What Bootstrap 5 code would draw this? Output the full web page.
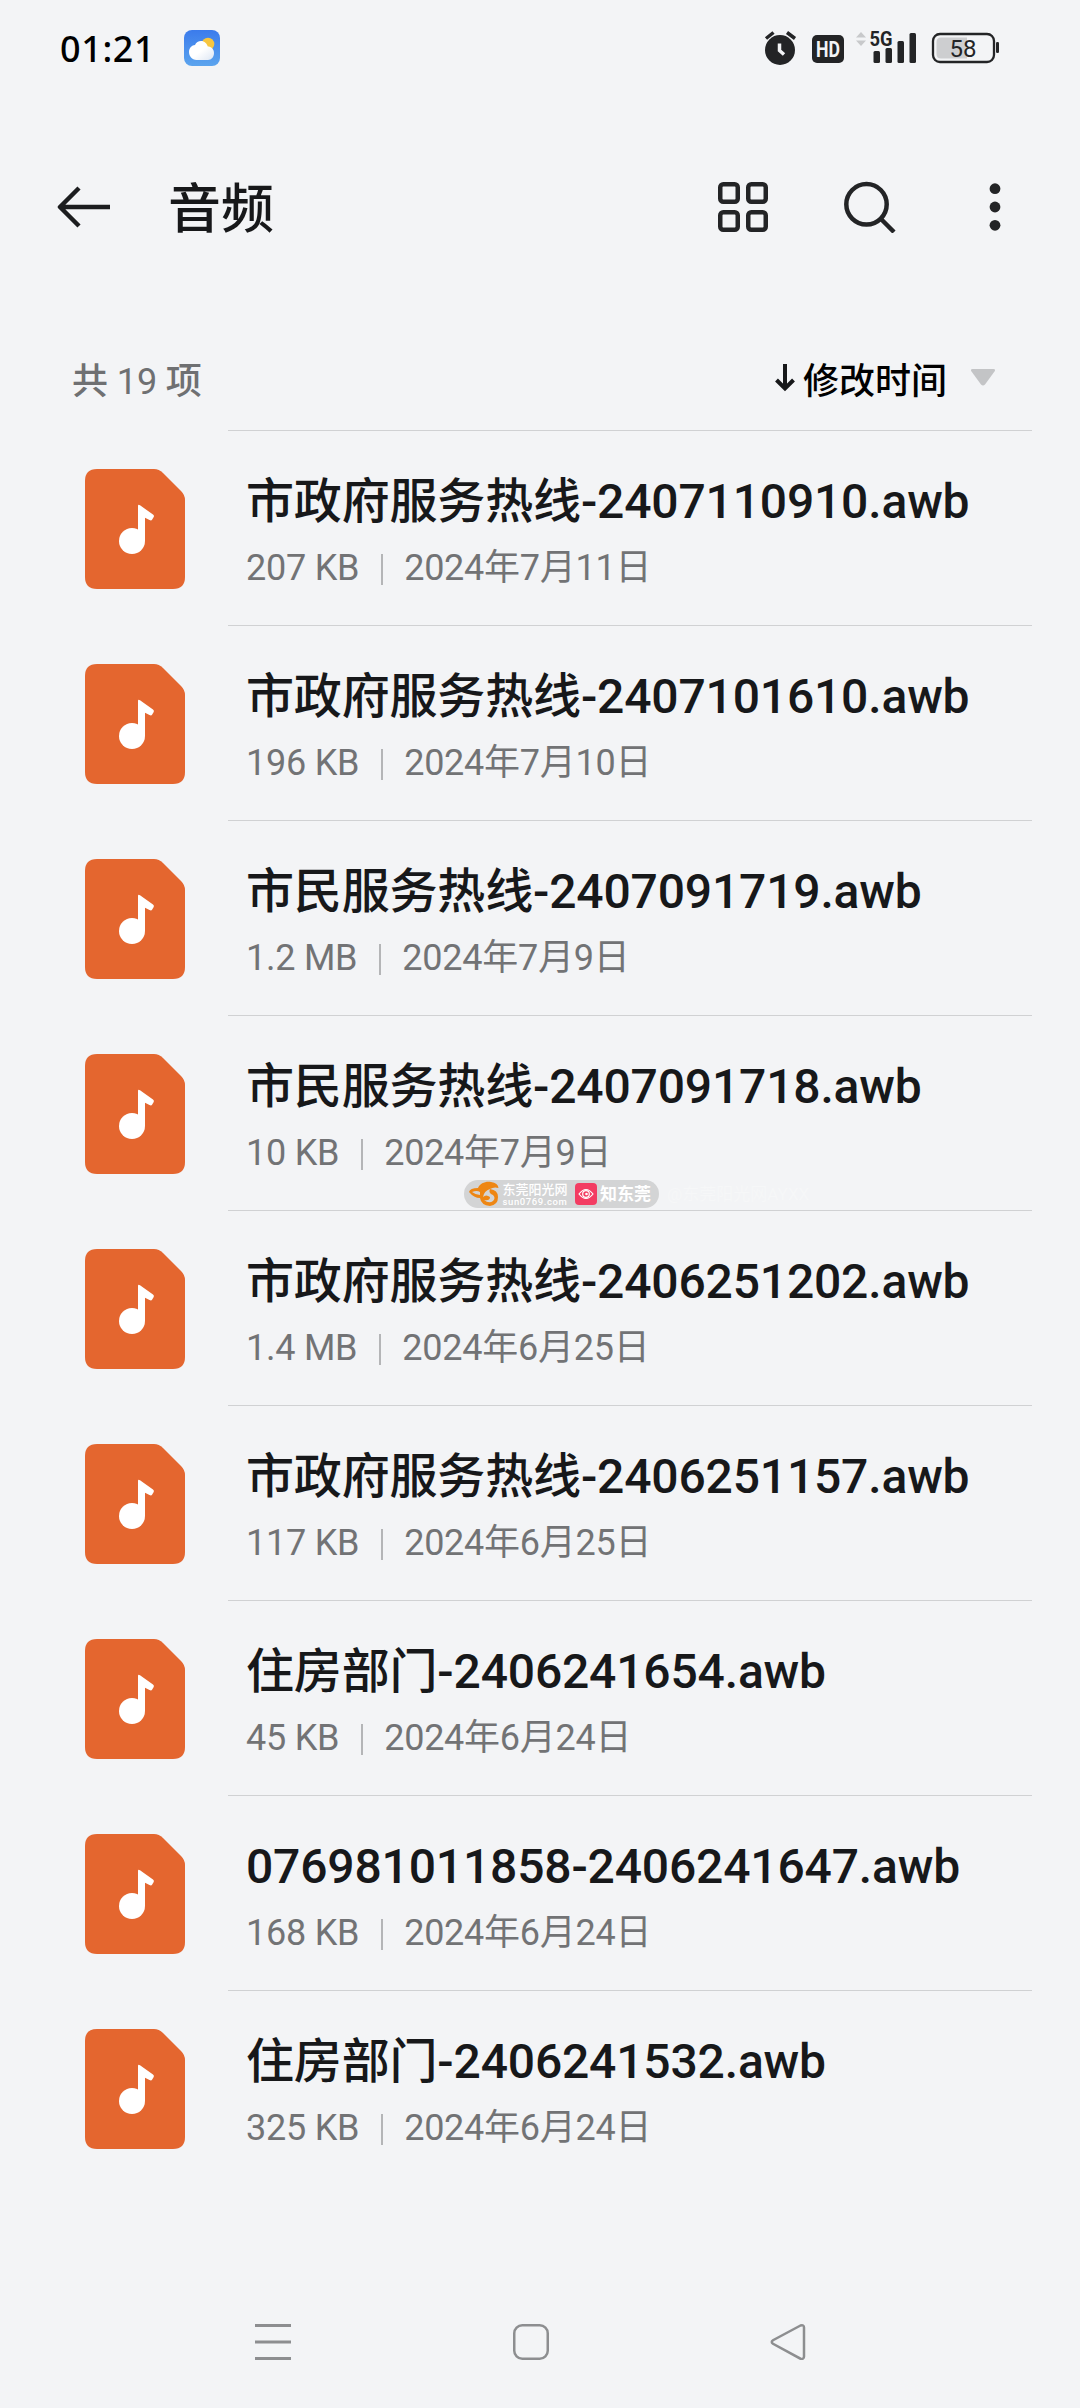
<!DOCTYPE html>
<html lang="zh-CN">
<head>
<meta charset="utf-8">
<meta name="viewport" content="width=device-width, initial-scale=1">
<title>音频</title>
<link href="https://cdn.jsdelivr.net/npm/bootstrap@5.3.0/dist/css/bootstrap.min.css" rel="stylesheet">
<style>
html,body{height:2408px}
body{width:1080px;background:#f3f4f6;color:#17181a;font-family:Roboto,"Noto Sans CJK SC",sans-serif;font-size:36px;line-height:1;overflow:hidden}
svg{display:block;flex:none}
.statusbar{height:96px;padding:0 80px 0 60px}
.clock{font-family:"Noto Sans",sans-serif;font-weight:500;font-size:36px;letter-spacing:.6px;color:#000;width:124px;padding-top:1px}
.topbar{height:222px;padding:0 79px 0 57px}
.page-title{font-size:53px;font-weight:500;margin:0 0 0 58px;padding-top:7px}
.search-icon{margin:0 93px 0 76px}
.sortbar{height:112px;padding:46px 85px 0 72px}
.count{color:#6f7072;font-weight:500;letter-spacing:-.1px}
.count span{font-weight:400}
.sort-by{color:#000;font-weight:500}
.file{height:195px;padding:0 48px 0 85px}
.file-body{margin-left:43px;padding-left:18px;border-top:1px solid #d0d1d3;height:195px}
.file-icon{margin-top:39px}
.file-name{font-size:48px;font-weight:500;line-height:60px;margin-top:41px;letter-spacing:-.16px;white-space:nowrap}
.file-meta{color:#727375;line-height:44px;margin-top:14px;letter-spacing:-.25px;white-space:nowrap}
.bar{width:2px;height:31px;background:#b4b5b7;margin:3px 21.5px 0 21.5px}
.wm{left:464px;top:1180px;height:28px;color:#fff;white-space:nowrap}
.wm-pill{width:195px;height:28px;border-radius:14px;background:#d3d4d5;padding-left:5px}
.wm-site{width:66px;margin:0 7px 0 2px;font-size:13px;font-weight:500;line-height:14px;text-align:center}
.wm-url{font-size:9.5px;line-height:9px;letter-spacing:.6px}
.wm-app{font-size:17px;font-weight:700;margin-left:3px}
.wm-user{font-size:17px;color:#f6f7f8;margin-left:8px}
.navkeys{padding:0 274px 0 254px;height:134px;margin-top:90px}
</style>
</head>
<body class="position-relative">
<svg width="0" height="0" class="position-absolute">
<symbol id="audio" viewBox="0 0 100 120">
<path fill="#e4662f" d="M12 0H69Q74 0 78 4L96 22Q100 26 100 31V108Q100 120 88 120H12Q0 120 0 108V12Q0 0 12 0Z"/>
<circle cx="47" cy="72" r="13" fill="#fff"/>
<path fill="#fff" d="M53 62V37Q53 35 55 36.3L68 45.500Q69.500 46.500 68.700 48L67.200 50.500Q66.300 52 64.500 51L60 48.700V72H53Z"/>
</symbol>
</svg>

<header class="statusbar d-flex align-items-center">
  <div class="clock">01:21</div>
  <svg width="36" height="36" viewBox="0 0 36 36">
    <defs><linearGradient id="sky" x2="0" y2="1"><stop stop-color="#3b7bec"/><stop offset="1" stop-color="#5ba4ee"/></linearGradient>
    <linearGradient id="cl" x2="1" y2="1"><stop offset=".5" stop-color="#fff"/><stop offset="1" stop-color="#dde6f3"/></linearGradient></defs>
    <rect width="36" height="36" rx="8" fill="url(#sky)"/><circle cx="24" cy="14" r="6.300" fill="#f7c640"/>
    <path fill="url(#cl)" d="M12.500 30C8 30 5 26 5 22s3-7 6-7c1-2.500 3.500-4 6-4 3.500 0 6 2.500 6.800 5.500C27 16.500 30 19 30 23s-2.500 7-6 7Z"/>
  </svg>
  <svg class="ms-auto" width="236" height="40" viewBox="765 28 236 40" fill="#232426">
    <circle cx="781" cy="50" r="15"/><path d="M767 38.500 774.500 32.500M788 32.500 796 38.500" stroke="#232426" stroke-width="3.500"/>
    <path d="M780.500 43.500V50.500L785 54.500" fill="none" stroke="#f3f4f6" stroke-width="3.500"/>
    <rect x="813" y="35" width="32" height="28" rx="5"/>
    <text x="829" y="56.800" font-family="Roboto" font-weight="700" font-size="22.500" text-anchor="middle" textLength="24" lengthAdjust="spacingAndGlyphs" fill="#f3f4f6">HD</text>
    <path d="M862 32 867 37.500H857ZM862 46 857 40.500H867Z" fill="#c8c9cb"/>
    <text x="870.500" y="46" font-family="Roboto" font-weight="700" font-size="20.500" textLength="23" lengthAdjust="spacingAndGlyphs">5G</text>
    <rect x="874.500" y="51" width="6.500" height="12" rx="1.500"/><rect x="886.500" y="48" width="6.500" height="15" rx="1.500"/><rect x="898.500" y="41" width="6.500" height="22" rx="1.500"/><rect x="910.500" y="33" width="6.500" height="30" rx="1.500"/>
    <rect x="934" y="34" width="61" height="28" rx="7" fill="none" stroke="#232426" stroke-width="2.300"/>
    <path d="M968 37.500V58.500H942Q937.500 58.500 937.500 54V42Q937.500 37.500 942 37.500Z" fill="#cdced0"/>
    <rect x="997" y="42" width="3" height="11" rx="1.300"/>
    <text x="964" y="57" font-family="Roboto" font-size="24" text-anchor="middle">58</text>
  </svg>
</header>

<nav class="topbar d-flex align-items-center">
  <svg width="53" height="42" viewBox="0 0 53 42" fill="none" stroke="#1c1d1f" stroke-width="4.500" stroke-linejoin="round"><path d="M53 21H3M22 2 3 21 22 40"/></svg>
  <h1 class="page-title">音频</h1>
  <svg class="ms-auto" width="50" height="50" viewBox="0 0 50 50" fill="none" stroke="#232426" stroke-width="4.500"><rect x="2.250" y="2.250" width="17.500" height="17.500" rx="3"/><rect x="30.250" y="2.250" width="17.500" height="17.500" rx="3"/><rect x="2.250" y="30.250" width="17.500" height="17.500" rx="3"/><rect x="30.250" y="30.250" width="17.500" height="17.500" rx="3"/></svg>
  <svg class="search-icon" width="52" height="52" viewBox="0 0 52 52" fill="none" stroke="#232426" stroke-width="4.500"><circle cx="22.500" cy="23.300" r="20.200"/><path d="M36.500 37.500 50 51"/></svg>
  <svg width="12" height="50" viewBox="0 0 12 50" fill="#232426"><circle cx="6" cy="6.700" r="5.400"/><circle cx="6" cy="25" r="5.400"/><circle cx="6" cy="43.300" r="5.400"/></svg>
</nav>

<section class="sortbar d-flex justify-content-between">
  <div class="count">共 <span>19</span> 项</div>
  <div class="d-flex sort-by">
    <svg width="20" height="28" viewBox="0 0 20 28" fill="none" stroke="#17181a" stroke-width="4"><path d="M10 0V25M1.500 16 10 24.500 18.500 16"/></svg>
    <div class="ms-2 me-4">修改时间</div>
    <svg class="mt-1" width="24" height="18" viewBox="0 -1 24 18" fill="#c3c4c6"><path d="M1.500 0H22.500Q25 0 23.500 2.500L14 15.500Q12 17.500 10 15.500L.5 2.500Q-1 0 1.500 0Z"/></svg>
  </div>
</section>

<main id="files"></main>

<div class="wm position-absolute d-flex align-items-center">
  <div class="wm-pill d-flex align-items-center">
    <svg width="31" height="26" viewBox="0 0 31 26"><path fill="#ee8613" d="M9 7C11 2 17 0 22 1Q29 2 29.500 7Q25 5.500 21 8Q29 9 29 16Q29 24 21 25Q12 24 11 17Q5 17 0 11Q1 7 9 7Z"/><path fill="#d3d4d5" d="M3 11Q8 9 11 11L11 14Q7 14 3 11ZM14 16Q15 10 21 8Q19 12 24 14Q27 17 24 20Q20 23 15 19Q21 20 21 16Q17 13 14 16Z"/></svg>
    <div class="wm-site">东莞阳光网<div class="wm-url">sun0769.com</div></div>
    <svg width="22" height="22" viewBox="0 0 22 22"><rect width="22" height="22" rx="4" fill="#f33c62"/><g fill="none" stroke="#fff" stroke-width="1.200"><path d="M4 11Q11 2 18 11Q11 20 4 11Z"/><circle cx="11" cy="11" r="3.300"/></g><circle cx="11.500" cy="11" r="1.300" fill="#fff"/></svg>
    <div class="wm-app">知东莞</div>
  </div>
  <div class="wm-user">@东莞阳光网AYXX</div>
</div>

<footer class="navkeys d-flex align-items-center justify-content-between">
  <svg width="38" height="38" viewBox="0 0 38 38" stroke="#8d8e90" stroke-width="3"><path d="M1 2.500H37M1 19H37M1 35.500H37"/></svg>
  <svg width="36" height="36" viewBox="0 0 36 36" fill="none" stroke="#8d8e90" stroke-width="2.500"><rect x="1.250" y="1.250" width="33.500" height="33.500" rx="8"/></svg>
  <svg width="36" height="38" viewBox="0 0 36 38" fill="none" stroke="#8d8e90" stroke-width="2.500"><path d="M30.500 2.500 3 17.200Q.5 19 3 20.800L30.500 35.700Q34 36.500 34 33.500V4.500Q34 1.500 30.500 2.500Z"/></svg>
</footer>
<script>
const files=[["市政府服务热线-2407110910.awb","207 KB","2024年7月11日"],["市政府服务热线-2407101610.awb","196 KB","2024年7月10日"],["市民服务热线-2407091719.awb","1.2 MB","2024年7月9日"],["市民服务热线-2407091718.awb","10 KB","2024年7月9日"],["市政府服务热线-2406251202.awb","1.4 MB","2024年6月25日"],["市政府服务热线-2406251157.awb","117 KB","2024年6月25日"],["住房部门-2406241654.awb","45 KB","2024年6月24日"],["076981011858-2406241647.awb","168 KB","2024年6月24日"],["住房部门-2406241532.awb","325 KB","2024年6月24日"]];
document.getElementById("files").innerHTML=files.map(([n,s,d])=>`<div class="file d-flex"><svg class="file-icon" width="100" height="120"><use href="#audio"/></svg><div class="file-body flex-grow-1"><div class="file-name">${n}</div><div class="file-meta d-flex align-items-center"><span>${s}</span><i class="bar"></i><span>${d}</span></div></div></div>`).join("");
</script>
<script src="https://cdn.jsdelivr.net/npm/bootstrap@5.3.0/dist/js/bootstrap.bundle.min.js"></script>
</body>
</html>
